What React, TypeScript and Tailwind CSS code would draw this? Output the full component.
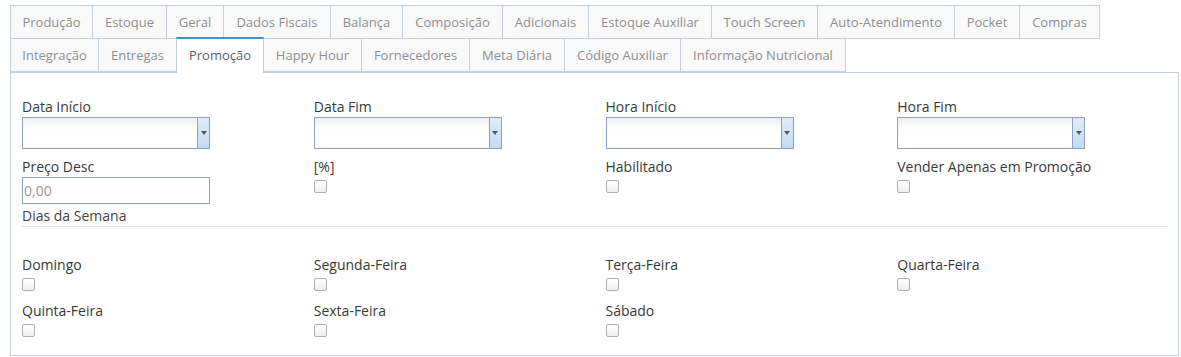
import React from 'react';

const rowOne = [
  { label: 'Produção', w: 'w-[83px]' },
  { label: 'Estoque', w: 'w-[75px]' },
  { label: 'Geral', w: 'w-[58px]' },
  { label: 'Dados Fiscais', w: 'w-[108px]' },
  { label: 'Balança', w: 'w-[73px]' },
  { label: 'Composição', w: 'w-[101px]' },
  { label: 'Adicionais', w: 'w-[87px]' },
  { label: 'Estoque Auxiliar', w: 'w-[124px]' },
  { label: 'Touch Screen', w: 'w-[107px]' },
  { label: 'Auto-Atendimento', w: 'w-[138px]' },
  { label: 'Pocket', w: 'w-[66px]' },
  { label: 'Compras', w: 'w-[81px]' },
];

const rowTwo = [
  { label: 'Integração', w: 'w-[89px]' },
  { label: 'Entregas', w: 'w-[79px]' },
  { label: 'Promoção', w: 'w-[88px]', active: true },
  { label: 'Happy Hour', w: 'w-[99px]' },
  { label: 'Fornecedores', w: 'w-[109px]' },
  { label: 'Meta Diária', w: 'w-[96px]' },
  { label: 'Código Auxiliar', w: 'w-[117px]' },
  { label: 'Informação Nutricional', w: 'w-[166px]' },
];

interface TabDef {
  label: string;
  w: string;
  active?: boolean;
}

const Tab: React.FC<{ tab: TabDef }> = ({ tab }) =>
  tab.active ? (
    <div
      className={`${tab.w} relative z-10 -mr-px -mt-px h-[36px] shrink-0 border-x border-t-2 border-x-[#c5d0dc] border-t-[#4c8fbd] bg-white pb-px text-center text-[13px] leading-[32px] text-[#576373]`}
    >
      {tab.label}
    </div>
  ) : (
    <div
      className={`${tab.w} -mr-px h-[34px] shrink-0 border border-[#c5d0dc] bg-[#f9f9f9] text-center text-[13px] leading-[32px] text-[#8f8f8f]`}
    >
      {tab.label}
    </div>
  );

const Label: React.FC<{ children: React.ReactNode }> = ({ children }) => (
  <div className="h-[18px] whitespace-nowrap text-[14px] leading-[18px] text-[#393939]">{children}</div>
);

const DateSelect = () => (
  <div className="mt-px flex h-[32px] w-[188px] border border-[#8ba3c1] bg-gradient-to-b from-[#f0f0f0] to-white to-40%">
    <div className="flex-1" />
    <div className="flex w-[12px] items-center justify-center border-l border-[#8ba3c1] bg-gradient-to-b from-[#e0ecf8] to-[#c2daf2]">
      <div className="h-0 w-0 border-x-[3px] border-t-[4px] border-x-transparent border-t-[#555]" />
    </div>
  </div>
);

const Check = () => (
  <div className="mt-[4px] h-[13px] w-[13px] rounded-[2px] border border-[#b0b0b0] bg-gradient-to-b from-white to-[#efefef]" />
);

const CheckField: React.FC<{ label: string }> = ({ label }) => (
  <div className="pl-[11px] pb-[11px]">
    <Label>{label}</Label>
    <Check />
  </div>
);

export default function App() {
  return (
    <div
      className="min-h-[357px] bg-white pt-[5px]"
      style={{ fontFamily: '"Open Sans", "Noto Sans", sans-serif' }}
    >
      <div className="ml-[10px] flex">
        {rowOne.map((t) => (
          <Tab key={t.label} tab={t} />
        ))}
      </div>
      <div className="ml-[10px] -mt-px flex items-start">
        {rowTwo.map((t) => (
          <Tab key={t.label} tab={t} />
        ))}
      </div>
      <div className="ml-[10px] -mt-px w-[1169px] border border-[#c5d0dc] pt-[25px] pb-[7px]">
        <div className="grid grid-cols-4">
          {['Data Início', 'Data Fim', 'Hora Início', 'Hora Fim'].map((l) => (
            <div key={l} className="pl-[11px]">
              <Label>{l}</Label>
              <DateSelect />
            </div>
          ))}
        </div>
        <div className="mt-[9px] grid grid-cols-4 items-start">
          <div className="pl-[11px]">
            <Label>Preço Desc</Label>
            <input
              className="mt-px h-[27px] w-[188px] border border-[#8ba3c1] px-px text-[14px] text-[#333] outline-none placeholder:text-[#999]"
              placeholder="0,00"
            />
            <div className="mt-[3px] h-[18px] text-[14px] leading-[18px] text-[#444]">Dias da Semana</div>
          </div>
          <CheckField label="[%]" />
          <CheckField label="Habilitado" />
          <CheckField label="Vender Apenas em Promoção" />
        </div>
        <div className="mx-[11px] mt-px h-px bg-[#e3e3e3]" />
        <div className="mt-[29px] grid grid-cols-4">
          {['Domingo', 'Segunda-Feira', 'Terça-Feira', 'Quarta-Feira', 'Quinta-Feira', 'Sexta-Feira', 'Sábado'].map(
            (d) => (
              <CheckField key={d} label={d} />
            )
          )}
        </div>
      </div>
    </div>
  );
}
